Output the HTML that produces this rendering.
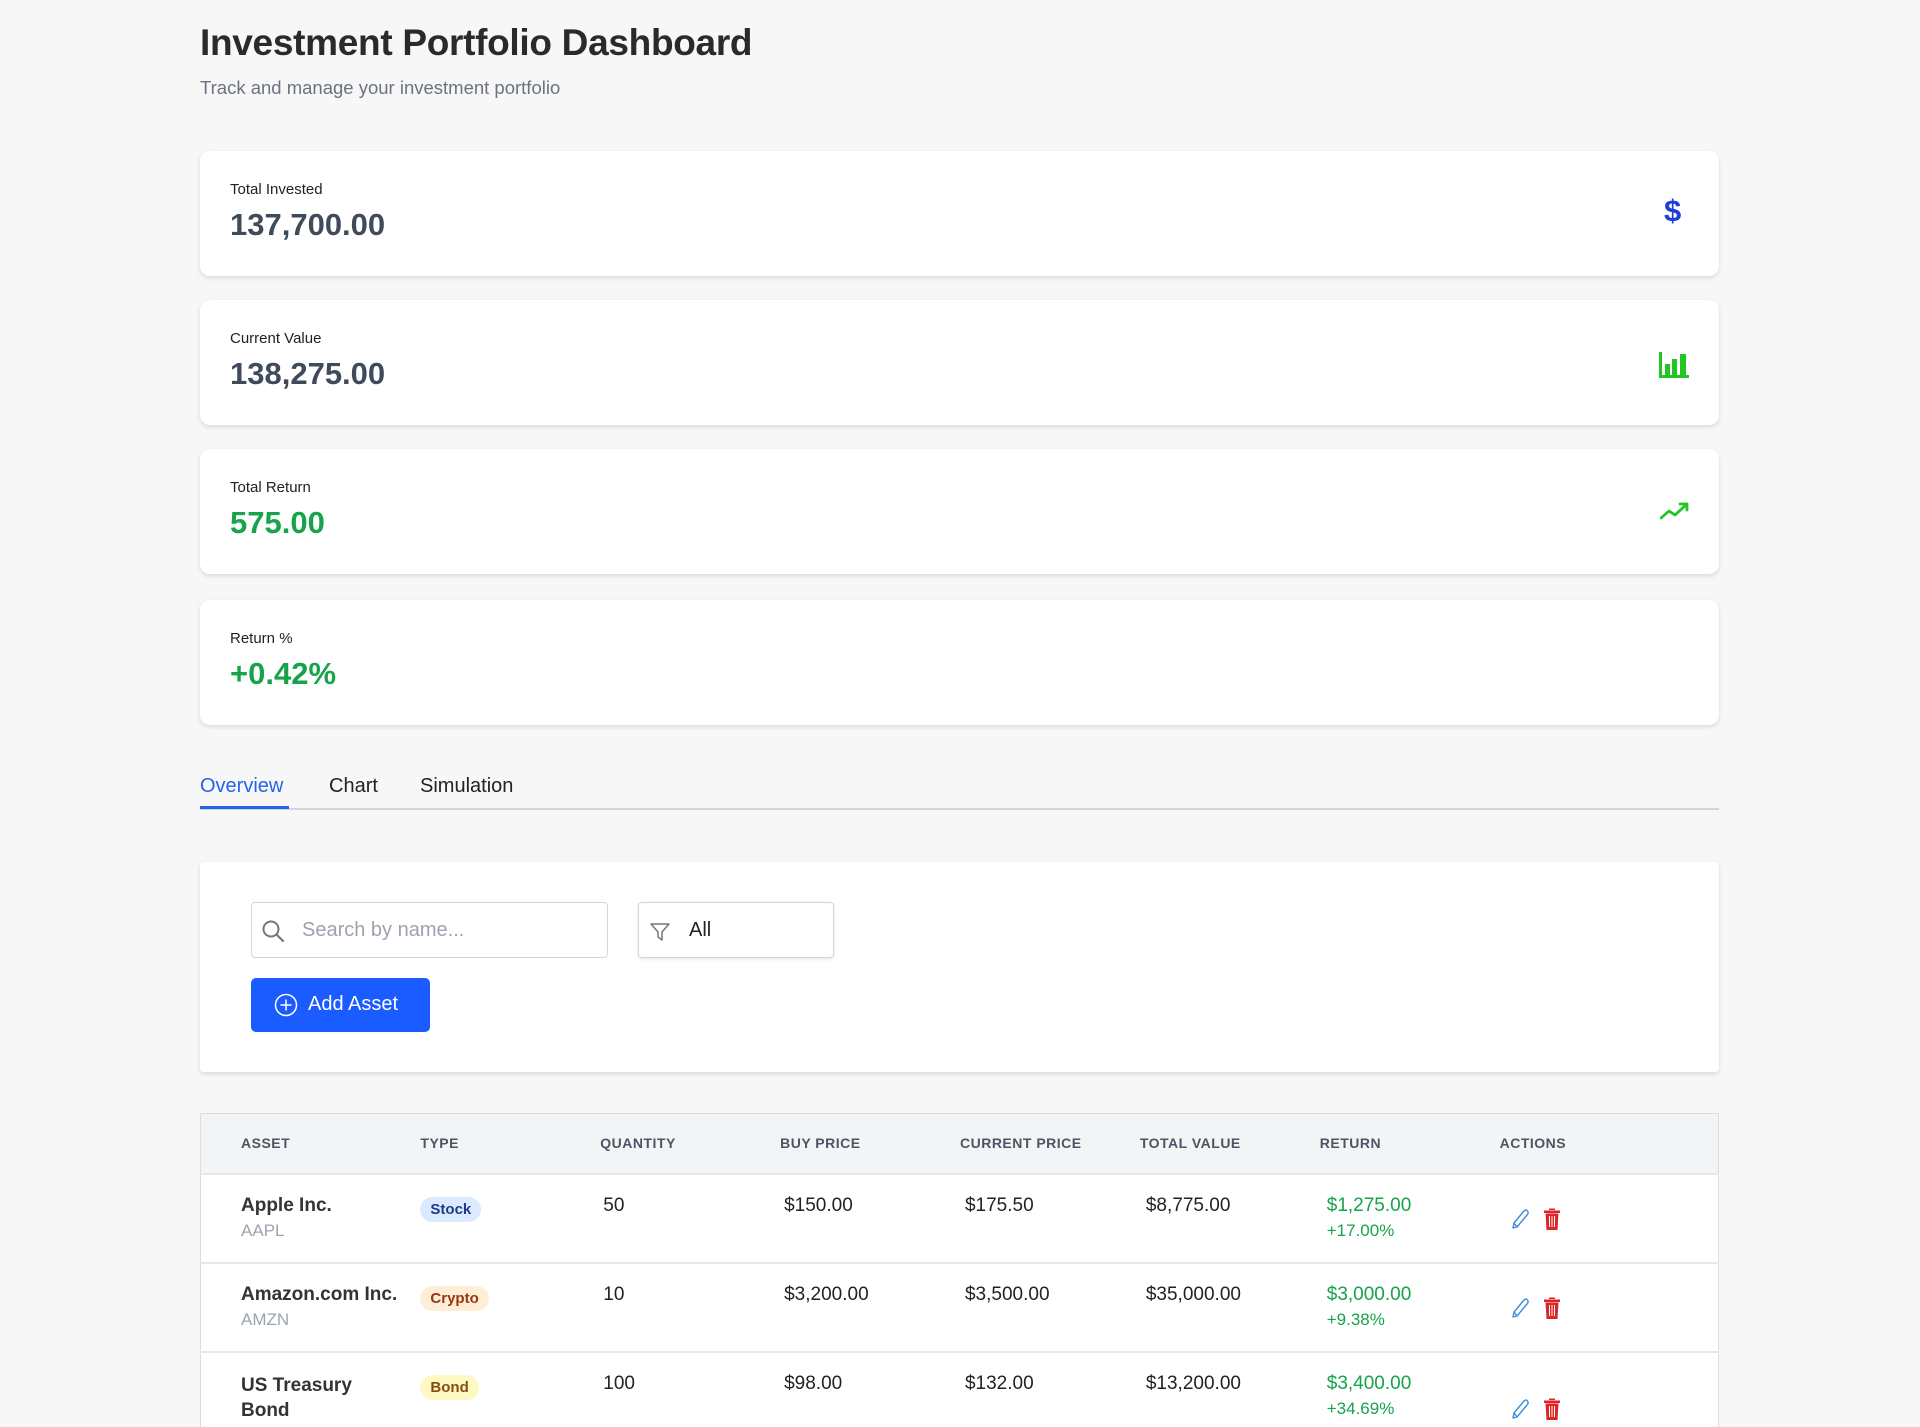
<!DOCTYPE html>
<html><head><meta charset="utf-8">
<style>
*{box-sizing:border-box;margin:0;padding:0}
html,body{width:1920px;height:1427px;overflow:hidden}
body{background:#f7f7f7;font-family:"Liberation Sans",sans-serif;color:#222;position:relative}
.abs{position:absolute}
h1{position:absolute;left:200px;top:22px;font-size:37px;font-weight:bold;color:#2a2a2a;letter-spacing:-0.3px}
.sub{position:absolute;left:200px;top:77px;font-size:18.5px;color:#6b7280}
.card{position:absolute;left:200px;width:1519px;height:125px;background:#fff;border-radius:10px;box-shadow:0 2px 5px rgba(0,0,0,0.12)}
.card .lbl{position:absolute;left:30px;top:30px;font-size:15px;color:#222}
.card .val{position:absolute;left:30px;top:56px;font-size:31px;font-weight:bold;color:#3f4a5a}
.card .ic{position:absolute;left:1458px;top:44px}
.green{color:#16a34a!important}
.tabs{position:absolute;left:200px;top:766px;width:1519px;height:44px;border-bottom:2px solid #d1d5db}
.tab{position:absolute;top:9px;font-size:20px;color:#222}
.panel{position:absolute;left:200px;top:862px;width:1519px;height:210px;background:#fff;border-radius:4px;box-shadow:0 2px 5px rgba(0,0,0,0.12)}
.inp{position:absolute;border:1px solid #d1d5db;border-radius:4px;background:#fff;height:56px}
.btn{position:absolute;left:51px;top:116px;width:179px;height:54px;background:#1a5cff;border-radius:5px;color:#fff;font-size:20px}
table{position:absolute;left:200px;top:1113px;width:1519px;border-collapse:collapse;background:#fff;border:1px solid #d9dce1}
th{background:#f3f4f6;height:60px;text-align:left;font-size:14px;font-weight:bold;color:#4b5563;letter-spacing:0.5px;padding-left:0}
td{height:89px;vertical-align:top;padding-top:20px;font-size:19px;color:#222;border-top:2px solid #e5e7eb}
.s{font-size:17px;color:#9ca3af;margin-top:4px}
.badge{display:inline-block;padding:4px 10px;border-radius:14px;font-size:15px;font-weight:bold;margin-top:2px}
.gr{color:#16a34a}
.gs{color:#16a34a;font-size:17px;margin-top:4px}
</style></head><body>
<h1>Investment Portfolio Dashboard</h1>
<div class="sub">Track and manage your investment portfolio</div>

<div class="card" style="top:151px"><div class="lbl">Total Invested</div><div class="val">137,700.00</div>
<div class="ic" style="left:1464px;top:42px;font-size:31px;font-weight:bold;color:#1d3fd8">$</div></div>

<div class="card" style="top:300px"><div class="lbl">Current Value</div><div class="val">138,275.00</div>
<svg class="ic" style="top:52px;left:1458px" width="32" height="26" viewBox="0 0 32 26"><rect x="1" y="0" width="3" height="26" fill="#22c522"/><rect x="1" y="23" width="30" height="3" fill="#22c522"/><rect x="7" y="12" width="5" height="11" fill="#22c522"/><rect x="14" y="7" width="5" height="16" fill="#22c522"/><rect x="22" y="2" width="6" height="21" fill="#22c522"/></svg></div>

<div class="card" style="top:449px"><div class="lbl">Total Return</div><div class="val green">575.00</div>
<svg class="ic" style="top:52px;left:1460px" width="30" height="20" viewBox="0 0 30 20"><path d="M1 17 L9 10 L15 14 L27 3 M20 3 H27 V9" fill="none" stroke="#22c522" stroke-width="2.8" stroke-linecap="round" stroke-linejoin="round"/></svg></div>

<div class="card" style="top:600px"><div class="lbl">Return %</div><div class="val green">+0.42%</div></div>

<div class="tabs">
<div class="tab" style="left:0;color:#2563eb">Overview</div>
<div class="abs" style="left:0;top:40px;width:89px;height:3px;background:#2563eb"></div>
<div class="tab" style="left:129px">Chart</div>
<div class="tab" style="left:220px">Simulation</div>
</div>

<div class="panel">
<div class="inp" style="left:51px;top:40px;width:357px">
<svg class="abs" style="left:9px;top:16px" width="26" height="26" viewBox="0 0 26 26"><circle cx="10" cy="10" r="7.5" fill="none" stroke="#777" stroke-width="2"/><path d="M15.5 15.5 L22 22" stroke="#777" stroke-width="2.2" stroke-linecap="round"/></svg>
<div class="abs" style="left:50px;top:16px;font-size:20px;color:#9ca3af">Search by name...</div></div>
<div class="inp" style="left:438px;top:40px;width:196px;box-shadow:0 1px 3px rgba(0,0,0,0.12)">
<svg class="abs" style="left:10px;top:18px" width="22" height="22" viewBox="0 0 22 22"><path d="M2 3 H20 L13 11 V19 L9 16 V11 Z" fill="none" stroke="#777" stroke-width="1.5" stroke-linejoin="round"/></svg>
<div class="abs" style="left:50px;top:16px;font-size:20px;color:#222">All</div></div>
<div class="btn">
<svg class="abs" style="left:23px;top:15px" width="24" height="24" viewBox="0 0 24 24"><circle cx="12" cy="12" r="10.5" fill="none" stroke="#fff" stroke-width="1.5"/><path d="M12 6.5V17.5M6.5 12H17.5" stroke="#fff" stroke-width="1.5"/></svg>
<div class="abs" style="left:57px;top:15px">Add Asset</div></div>
</div>

<table>
<colgroup><col style="width:220px"><col style="width:180px"><col style="width:180px"><col style="width:180px"><col style="width:180px"><col style="width:180px"><col style="width:180px"><col style="width:219px"></colgroup>
<tr><th style="padding-left:40px">ASSET</th><th>TYPE</th><th>QUANTITY</th><th>BUY PRICE</th><th>CURRENT PRICE</th><th>TOTAL VALUE</th><th>RETURN</th><th>ACTIONS</th></tr>
<tr><td style="padding-left:40px"><b style="font-weight:bold;color:#333">Apple Inc.</b><div class="s">AAPL</div></td><td><span class="badge" style="background:#dbeafe;color:#1e3a8a">Stock</span></td><td style="padding-left:3px">50</td><td style="padding-left:4px">$150.00</td><td style="padding-left:5px">$175.50</td><td style="padding-left:6px">$8,775.00</td><td style="padding-left:7px"><span class="gr">$1,275.00</span><div class="gs">+17.00%</div></td><td style="padding-left:10px;padding-top:32px">ICONS</td></tr>
<tr><td style="padding-left:40px"><b style="color:#333">Amazon.com Inc.</b><div class="s">AMZN</div></td><td><span class="badge" style="background:#ffedd5;color:#9a3412">Crypto</span></td><td style="padding-left:3px">10</td><td style="padding-left:4px">$3,200.00</td><td style="padding-left:5px">$3,500.00</td><td style="padding-left:6px">$35,000.00</td><td style="padding-left:7px"><span class="gr">$3,000.00</span><div class="gs">+9.38%</div></td><td style="padding-left:10px;padding-top:32px">ICONS</td></tr>
<tr><td style="padding-left:40px;line-height:25px"><b style="color:#333">US Treasury<br>Bond</b><div class="s">UST</div></td><td><span class="badge" style="background:#fef9c3;color:#854d0e">Bond</span></td><td style="padding-left:3px">100</td><td style="padding-left:4px">$98.00</td><td style="padding-left:5px">$132.00</td><td style="padding-left:6px">$13,200.00</td><td style="padding-left:7px"><span class="gr">$3,400.00</span><div class="gs">+34.69%</div></td><td style="padding-left:10px;padding-top:44px">ICONS</td></tr>
</table>
<script>
var ic='<svg width="20" height="22" viewBox="0 0 20 22" style="vertical-align:middle;margin-right:12px"><path d="M3 20 L4 15 L14 3 Q16 1 17.5 3 Q19 5 17 7 L7 19 Z M4 15 L7 19" fill="none" stroke="#3b8ede" stroke-width="1.4" stroke-linejoin="round"/></svg><svg width="20" height="24" viewBox="0 0 20 24" style="vertical-align:middle"><path d="M7 3 V1.5 H13 V3 M2 3.5 H18 V6 H2 Z" fill="#dc2626"/><path d="M3.5 6.5 H16.5 L15.5 23 H4.5 Z" fill="#dc2626"/><path d="M7.5 9 V20 M10 9 V20 M12.5 9 V20" stroke="#fff" stroke-width="1"/></svg>';
document.querySelectorAll('td').forEach(function(t){if(t.textContent==='ICONS')t.innerHTML=ic;});
</script>
</body></html>
